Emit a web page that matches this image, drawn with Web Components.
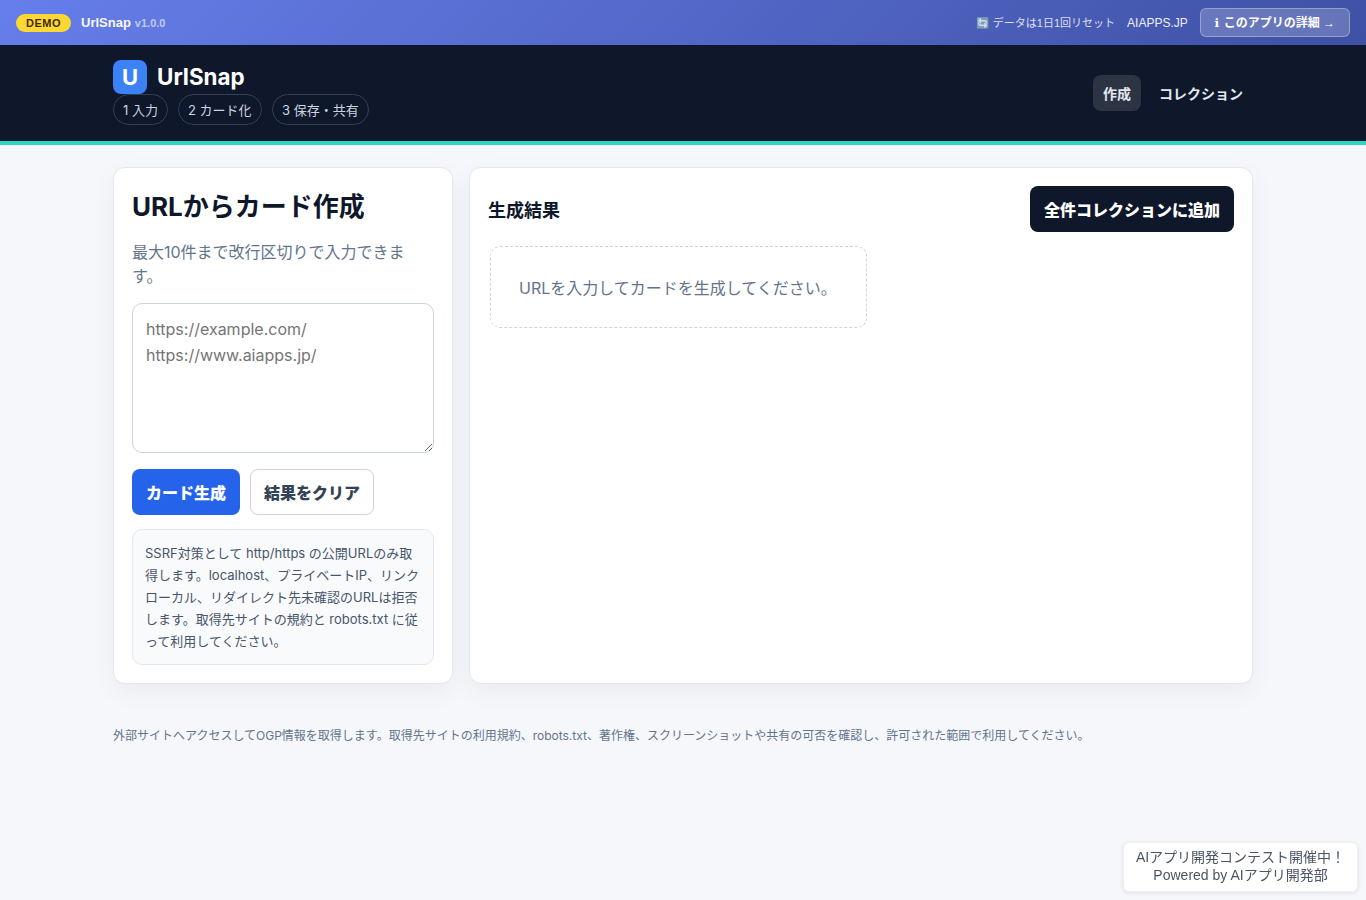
<!DOCTYPE html>
<html lang="ja">
<head>
<meta charset="utf-8">
<title>UrlSnap</title>
<style>
  html, body { margin: 0; padding: 0; }
  body {
    min-height: 900px;
    background: #f5f7fb;
    color: #0f172a;
    font-family: Inter, "Noto Sans CJK JP", sans-serif;
  }
</style>
</head>
<body>
<demo-bar></demo-bar>
<site-header></site-header>
<main-view>
  <url-form></url-form>
  <result-panel></result-panel>
</main-view>
<contest-badge></contest-badge>
<script>
const FONT = 'Inter, "Noto Sans CJK JP", sans-serif';

class DemoBar extends HTMLElement {
  constructor() {
    super();
    this.attachShadow({ mode: 'open' }).innerHTML = `
      <style>
        :host {
          display: flex;
          align-items: center;
          justify-content: space-between;
          box-sizing: border-box;
          height: 45px;
          padding: 0 16px;
          background: linear-gradient(135deg, #667eea 0%, #3f51a5 100%);
          color: #fff;
          font-family: "Liberation Sans", "Noto Sans CJK JP", sans-serif;
        }
        .side { display: flex; align-items: center; }
        .badge {
          background: #fdd835;
          color: #3f2a00;
          font-size: 11px;
          font-weight: 700;
          letter-spacing: 0.5px;
          height: 18px;
          line-height: 18px;
          padding: 0 10px;
          border-radius: 10px;
          margin-right: 10px;
        }
        .name { font-size: 13px; font-weight: 700; opacity: .95; }
        .ver { font-size: 11px; font-weight: 700; opacity: .6; margin-left: 4px; }
        .reset { font-size: 11px; opacity: .8; margin: 0 12px 2px 0; }
        .site { font-size: 12px; opacity: .9; margin-right: 12px; }
        .more {
          box-sizing: border-box;
          height: 29px;
          line-height: 29px;
          padding: 0 14px;
          font-size: 12px;
          font-weight: 700;
          border: 1px solid rgba(255,255,255,.3);
          border-radius: 6px;
          background: rgba(255,255,255,.2);
        }
        .info { font-family: "DejaVu Sans", sans-serif; margin-right: 1px; }
      </style>
      <div class="side">
        <span class="badge">DEMO</span>
        <span class="name">UrlSnap</span><span class="ver">v1.0.0</span>
      </div>
      <div class="side">
        <span class="reset">🔄 データは1日1回リセット</span>
        <span class="site">AIAPPS.JP</span>
        <span class="more"><span class="info">ℹ</span> このアプリの詳細 →</span>
      </div>`;
  }
}

class SiteHeader extends HTMLElement {
  constructor() {
    super();
    this.attachShadow({ mode: 'open' }).innerHTML = `
      <style>
        :host {
          display: block;
          height: 100px;
          box-sizing: border-box;
          background: #0f172a;
          border-bottom: 4px solid #2dd4bf;
          font-family: ${FONT};
        }
        .wrap {
          width: 1140px;
          margin: 0 auto;
          height: 96px;
          display: flex;
          align-items: center;
          justify-content: space-between;
        }
        .brand { margin-top: -2px; }
        .logo { display: flex; align-items: center; gap: 10px; }
        .mark {
          width: 34px;
          height: 34px;
          border-radius: 8px;
          background: #3b82f6;
          color: #fff;
          font-size: 22px;
          font-weight: 700;
          line-height: 34px;
          text-align: center;
        }
        .title { color: #fff; font-size: 22.4px; font-weight: 700; }
        .steps { display: flex; gap: 10px; }
        .step {
          box-sizing: border-box;
          height: 31px;
          line-height: 31px;
          padding: 0 9px;
          border: 1px solid #334155;
          border-radius: 16px;
          color: #cbd5e1;
          font-size: 13px;
        }
        .step:last-child { padding: 0 9.5px; }
        nav { display: flex; gap: 8px; }
        nav span {
          height: 36px;
          line-height: 38px;
          padding: 0 10px;
          border-radius: 8px;
          color: #e2e8f0;
          font-size: 14px;
          font-weight: 700;
        }
        nav .on { background: rgba(255,255,255,.12); }
      </style>
      <div class="wrap">
        <div class="brand">
          <div class="logo"><span class="mark">U</span><span class="title">UrlSnap</span></div>
          <div class="steps">
            <span class="step">1 入力</span>
            <span class="step">2 カード化</span>
            <span class="step">3 保存・共有</span>
          </div>
        </div>
        <nav><span class="on">作成</span><span>コレクション</span></nav>
      </div>`;
  }
}

class MainView extends HTMLElement {
  constructor() {
    super();
    this.attachShadow({ mode: 'open' }).innerHTML = `
      <style>
        :host {
          display: block;
          width: 1140px;
          margin: 0 auto;
          padding-top: 22px;
          font-family: ${FONT};
        }
        .grid { display: grid; grid-template-columns: 340px 784px; gap: 16px; height: 517px; }
        p { margin: 43px 0 0; font-size: 12px; line-height: 18px; color: #64748b; }
      </style>
      <div class="grid"><slot></slot></div>
      <p>外部サイトへアクセスしてOGP情報を取得します。取得先サイトの利用規約、robots.txt、著作権、スクリーンショットや共有の可否を確認し、許可された範囲で利用してください。</p>`;
  }
}

const CARD = `
  box-sizing: border-box;
  background: #fff;
  border: 1px solid #e2e8f0;
  border-radius: 12px;
  box-shadow: 0 8px 24px rgba(15,23,42,.05);
  padding: 18px;
`;

class UrlForm extends HTMLElement {
  constructor() {
    super();
    this.attachShadow({ mode: 'open' }).innerHTML = `
      <style>
        :host { display: block; ${CARD} }
        h1 { margin: 1px 0 0; font-size: 26px; line-height: 40px; font-weight: 700; color: #0f172a; }
        .lead { margin: 13px 0 15px; font-size: 16px; line-height: 24px; color: #64748b; }
        textarea {
          display: block;
          box-sizing: border-box;
          width: 302px;
          height: 150px;
          padding: 12px 13px;
          border: 1px solid #cbd5e1;
          border-radius: 10px;
          font: 16px/26px ${FONT};
          color: #0f172a;
          background: #fff;
        }
        .actions { display: flex; gap: 10px; margin-top: 16px; }
        button {
          box-sizing: border-box;
          height: 46px;
          padding: 0 14px;
          border-radius: 8px;
          font: 800 16px ${FONT};
        }
        .primary { background: #2563eb; border: 0; color: #fff; }
        .ghost { background: #fff; border: 1px solid #cbd5e1; color: #334155; padding: 0 13px; }
        .note {
          box-sizing: border-box;
          margin-top: 14px;
          padding: 12px;
          height: 136px;
          background: #f8fafc;
          border: 1px solid #e2e8f0;
          border-radius: 10px;
          font-size: 13px;
          line-height: 22px;
          color: #475569;
        }
      </style>
      <h1>URLからカード作成</h1>
      <p class="lead">最大10件まで改行区切りで入力できます。</p>
      <textarea placeholder="https://example.com/&#10;https://www.aiapps.jp/"></textarea>
      <div class="actions">
        <button class="primary">カード生成</button>
        <button class="ghost">結果をクリア</button>
      </div>
      <div class="note">SSRF対策として http/https の公開URLのみ取得します。localhost、プライベートIP、リンクローカル、リダイレクト先未確認のURLは拒否します。取得先サイトの規約と robots.txt に従って利用してください。</div>`;
  }
}

class ResultPanel extends HTMLElement {
  constructor() {
    super();
    this.attachShadow({ mode: 'open' }).innerHTML = `
      <style>
        :host { display: block; ${CARD} }
        .head { display: flex; align-items: center; justify-content: space-between; }
        h2 { margin: 0; font-size: 18px; font-weight: 700; color: #0f172a; }
        button {
          box-sizing: border-box;
          height: 46px;
          padding: 0 14px;
          border: 0;
          border-radius: 8px;
          background: #0f172a;
          color: #fff;
          font: 800 16px ${FONT};
        }
        .empty {
          box-sizing: border-box;
          width: 377px;
          height: 82px;
          margin: 14px 0 0 2px;
          line-height: 82px;
          padding: 0 28px;
          border: 1px dashed #cbd5e1;
          border-radius: 10px;
          font-size: 16px;
          color: #64748b;
        }
      </style>
      <div class="head"><h2>生成結果</h2><button>全件コレクションに追加</button></div>
      <div class="empty">URLを入力してカードを生成してください。</div>`;
  }
}

class ContestBadge extends HTMLElement {
  constructor() {
    super();
    this.attachShadow({ mode: 'open' }).innerHTML = `
      <style>
        :host {
          position: fixed;
          right: 8px;
          bottom: 8px;
          box-sizing: border-box;
          width: 235px;
          height: 50px;
          padding: 5px 0;
          background: #fff;
          border: 1px solid #eef0f4;
          border-radius: 6px;
          box-shadow: 0 1px 4px rgba(0,0,0,.1);
          color: #4b5563;
          font: 14px/18px "Liberation Sans", "Noto Sans CJK JP", sans-serif;
          text-align: center;
        }
      </style>
      AIアプリ開発コンテスト開催中！<br>Powered by AIアプリ開発部`;
  }
}

customElements.define('demo-bar', DemoBar);
customElements.define('site-header', SiteHeader);
customElements.define('main-view', MainView);
customElements.define('url-form', UrlForm);
customElements.define('result-panel', ResultPanel);
customElements.define('contest-badge', ContestBadge);
</script>
</body>
</html>
